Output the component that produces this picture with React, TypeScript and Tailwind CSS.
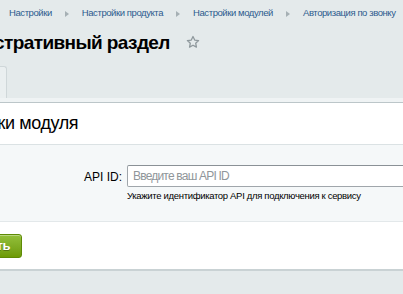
const crumbs = ["Настройки", "Настройки продукта", "Настройки модулей", "Авторизация по звонку"];

const Arrow = () => (
  <span className="inline-block w-0 h-0 border-y-[3.5px] border-y-transparent border-l-[4px] border-l-[#a6b0b4] mx-[13px]" />
);

const StarIcon = () => (
  <svg width="14" height="14" viewBox="0 0 24 24" fill="none" stroke="#8e989c" strokeWidth="2.2" strokeLinejoin="round">
    <path d="M12 2.5l2.9 6.2 6.7.8-5 4.6 1.3 6.7L12 17.5l-5.9 3.3 1.3-6.7-5-4.6 6.7-.8z" />
  </svg>
);

export default function App() {
  return (
    <div className="w-[403px] h-[294px] overflow-hidden bg-[#e4eaeb] font-['Liberation_Sans',Arial,sans-serif]">
      <div className="h-[26px] flex items-center pl-[9px] pt-[1px] text-[9.5px] tracking-[-0.42px] text-[#2c5b8e] whitespace-nowrap">
        {crumbs.map((c, i) => (
          <span key={c} className="flex items-center">
            {i > 0 && <Arrow />}
            <span>{c}</span>
          </span>
        ))}
      </div>

      <div className="h-[36px] flex items-center pb-[4px] whitespace-nowrap">
        <h1 className="ml-[-77px] shrink-0 text-[19px] tracking-[-0.6px] font-bold text-[#000] leading-none">
          Административный раздел
        </h1>
        <span className="ml-[16px] shrink-0">
          <StarIcon />
        </span>
      </div>

      <div className="h-[36px] flex items-end">
        <div className="w-[7px] h-[32px] bg-[#eaeff0] border-t border-r border-[#cfd7d9] rounded-tr-[3px]" />
      </div>
      <div className="h-[4px] bg-[#eff3f4]" />

      <div className="bg-white border-t border-[#bcc6c9] border-b-2 border-b-[#c9d2d4]">
        <div className="h-[42px] flex items-center border-b border-[#dbe2e4] whitespace-nowrap">
          <span className="ml-[-70px] shrink-0 text-[18px] tracking-[-0.4px] text-[#000]">Настройки модуля</span>
        </div>

        <div className="bg-[#f5f8f9] pt-[20px] h-[77px] border-b border-[#e3e8ea]">
          <div className="flex items-end">
            <label className="w-[122px] shrink-0 text-right text-[12px] text-[#000] pb-[1px]">API ID:</label>
            <input
              className="ml-[5px] w-[300px] shrink-0 h-[22px] border border-[#a0a6ab] border-t-[#8a9196] rounded-[2px] bg-white px-[5px] text-[12px] tracking-[-0.8px] text-[#000] placeholder:text-[#8f969a] outline-none"
              placeholder="Введите ваш API ID"
            />
          </div>
          <div className="ml-[127px] mt-[3px] text-[9.5px] tracking-[-0.32px] leading-[12px] text-[#000] whitespace-nowrap">
            Укажите идентификатор API для подключения к сервису
          </div>
        </div>

        <div className="h-[47px] pt-[11px]">
          <button className="ml-[-68px] h-[24px] px-[11px] rounded-[3px] border border-[#5e8a05] bg-gradient-to-b from-[#94c03a] to-[#6d9a03] text-white text-[13px] tracking-[-0.4px] font-bold [text-shadow:0_1px_rgba(0,0,0,0.3)] shadow-[inset_0_1px_0_rgba(255,255,255,0.35)]">
            Сохранить
          </button>
        </div>
      </div>
    </div>
  );
}
